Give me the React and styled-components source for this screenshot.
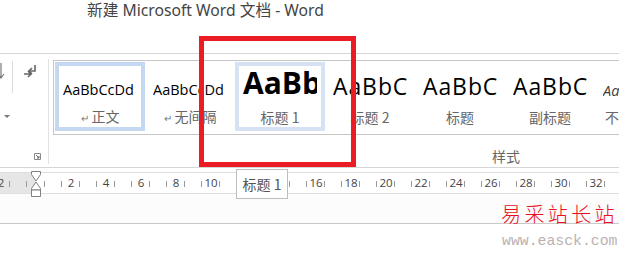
import React from "react";
import styled, { createGlobalStyle } from "styled-components";

const GlobalStyle = createGlobalStyle`
  html, body {
    margin: 0;
    padding: 0;
    background: #ffffff;
  }
  body {
    width: 619px;
    height: 255px;
    overflow: hidden;
    font-family: "Open Sans", "Noto Sans CJK SC", sans-serif;
  }
`;

const Window = styled.div`
  position: relative;
  width: 619px;
  height: 255px;
  overflow: hidden;
  display: flex;
  flex-direction: column;
`;

const TitleBar = styled.div`
  height: 54px;
  border-bottom: 1px solid #d6d6d6;
  padding-left: 87px;
  box-sizing: border-box;
`;

const Title = styled.div`
  font-family: "Noto Sans", "Noto Sans CJK SC", sans-serif;
  font-size: 15.7px;
  line-height: 20px;
  color: #444;
`;

const Ribbon = styled.div`
  height: 114px;
  border-bottom: 1px solid #d6d6d6;
  box-sizing: border-box;
  display: flex;
`;

const ParaGroup = styled.div`
  width: 48px;
  flex-shrink: 0;
  margin: 5px 0 3px;
  border-right: 1px solid #e2e2e2;
  display: grid;
  grid-template-columns: 13px 1fr;
  grid-template-rows: 43px 30px 1fr;
`;

const Cell = styled.div`
  display: flex;
  align-items: ${(p) => p.$align || "center"};
  justify-content: ${(p) => p.$justify || "center"};
  grid-column: ${(p) => p.$col || "auto"};
`;

const Divider = styled.div`
  align-self: start;
  height: 32px;
  margin-top: 2px;
  border-right: 1px solid #dcdcdc;
  display: flex;
  align-items: flex-start;
`;

const StylesGroup = styled.div`
  flex: 1;
  display: flex;
  flex-direction: column;
  padding-left: 4px;
  padding-top: 6px;
`;

const Gallery = styled.div`
  height: 75px;
  box-sizing: border-box;
  border: 1px solid #c6c6c6;
  border-right: none;
  padding: 1px 0 0 1px;
  display: flex;
  overflow: hidden;
`;

const Item = styled.div`
  width: 90px;
  height: 69px;
  flex-shrink: 0;
  box-sizing: border-box;
  border: 4px solid ${(p) => p.$frame || "transparent"};
  padding: 0 4px;
  display: flex;
  flex-direction: column;
  overflow: hidden;
`;

const Sample = styled.div`
  height: 32px;
  display: flex;
  align-items: flex-end;
  white-space: nowrap;
  overflow: hidden;
  font-family: "Open Sans", sans-serif;
  font-size: ${(p) => p.$size}px;
  font-weight: ${(p) => (p.$bold ? 700 : 400)};
  font-style: ${(p) => (p.$italic ? "italic" : "normal")};
  color: ${(p) => p.$color || "#000"};
  line-height: 1;
  letter-spacing: ${(p) => p.$track || 0}px;
`;

const Label = styled.div`
  margin-top: 10px;
  text-align: center;
  white-space: nowrap;
  font-family: "Noto Sans CJK SC", sans-serif;
  font-size: 14px;
  line-height: 18px;
  color: #666;
`;

const Mark = styled.span`
  font-size: 10px;
  margin-right: 3px;
  color: #777;
`;

const GroupFooter = styled.div`
  width: 906px;
  text-align: center;
  margin-top: 11px;
  font-family: "Noto Sans CJK SC", sans-serif;
  font-size: 14px;
  color: #666;
`;

const Gap = styled.div`
  height: 4px;
`;

const Ruler = styled.div`
  position: relative;
  height: 22px;
  box-sizing: border-box;
  border-top: 1px solid #dedede;
  border-bottom: 1px solid #dedede;
  display: flex;
  align-items: center;
  background: linear-gradient(to right, #e6e6e6 0 36px, #ffffff 36px);
`;

const Scale = styled.div`
  display: flex;
  margin-left: -7.75px;
`;

const Unit = styled.div`
  position: relative;
  width: 17.5px;
  flex-shrink: 0;
  text-align: center;
  font-family: "Open Sans", sans-serif;
  font-size: 11.5px;
  line-height: 20px;
  color: #444;

  &::after {
    content: "";
    position: absolute;
    right: 0;
    top: 8px;
    width: 1px;
    height: 6px;
    background: #9a9a9a;
  }
`;

const Indent = styled.svg`
  position: absolute;
  left: 30px;
  top: -2px;
`;

const DocArea = styled.div`
  height: 30px;
  box-sizing: border-box;
  background: #fcfcfc;
  border-bottom: 1px solid #c9c9c9;
`;

const Highlight = styled.div`
  position: absolute;
  left: 199px;
  top: 36px;
  width: 157px;
  height: 131px;
  box-sizing: border-box;
  border: 5px solid #ec1c24;
`;

const Tip = styled.div`
  position: absolute;
  left: 236px;
  top: 169px;
  width: 52px;
  height: 30px;
  box-sizing: border-box;
  border: 1px solid #bdbdbd;
  background: #fff;
  display: flex;
  align-items: center;
  justify-content: center;
  font-family: "Noto Sans CJK SC", sans-serif;
  font-size: 14px;
  color: #555;
`;

const Stamp = styled.div`
  position: absolute;
  left: 501px;
  top: 201px;
  display: flex;
  flex-direction: column;
  align-items: flex-start;
  white-space: nowrap;
`;

const StampName = styled.div`
  font-family: "Noto Sans CJK SC", serif;
  font-size: 20px;
  font-weight: 300;
  letter-spacing: 3.4px;
  color: #e8101c;
  line-height: 26px;
`;

const StampUrl = styled.div`
  font-family: "Liberation Mono", monospace;
  font-size: 14.8px;
  color: #bbb1b1;
  line-height: 20px;
  margin-top: 4px;
  margin-left: 1px;
`;

const styles = [
  { sample: "AaBbCcDd", size: 14.5, label: "正文", mark: true, frame: "#c5d8f1" },
  { sample: "AaBbCcDd", size: 14.5, label: "无间隔", mark: true },
  { sample: "AaBb", size: 30, bold: true, label: "标题 1", frame: "#d6e2f3" },
  { sample: "AaBbC", size: 23, label: "标题 2", track: 0.9 },
  { sample: "AaBbC", size: 23, label: "标题", track: 0.9 },
  { sample: "AaBbC", size: 23, label: "副标题", track: 0.9 },
  { sample: "AaBbCcDd", size: 14.5, italic: true, color: "#404040", label: "不明显强调" },
];

const units = Array.from({ length: 38 }, (_, i) => i - 2);

export default function App() {
  return (
    <>
      <GlobalStyle />
      <Window>
        <TitleBar>
          <Title>新建 Microsoft Word 文档 - Word</Title>
        </TitleBar>

        <Ribbon>
          <ParaGroup>
            <Divider>
              <svg width="6" height="20" viewBox="0 0 6 20">
                <path d="M1 2v14M-2 13l3 4 3-4" stroke="#777" strokeWidth="1.2" fill="none" />
              </svg>
            </Divider>
            <Cell $align="flex-start">
              <svg width="18" height="18" viewBox="0 0 18 18" style={{ marginTop: 4 }}>
                <path d="M13 2v6H8" stroke="#666" strokeWidth="1.6" fill="none" />
                <path d="M10 5l-3 3 3 3" stroke="#666" strokeWidth="1.6" fill="none" />
                <path d="M2 11h7M6 8l3 3-3 3" stroke="#666" strokeWidth="1.6" fill="none" />
              </svg>
            </Cell>
            <Cell>
              <svg width="6" height="4" viewBox="0 0 6 4">
                <path d="M0 0h6L3 3z" fill="#777" />
              </svg>
            </Cell>
            <Cell />
            <Cell $col="1 / span 2" $justify="flex-end" $align="flex-end">
              <svg width="7" height="7" viewBox="0 0 7 7" style={{ marginRight: 7, marginBottom: 4 }}>
                <path d="M0.5 6.5V0.5h6v6z" stroke="#888" fill="none" />
                <path d="M2 2l3 3M3 5h2V3" stroke="#666" fill="none" />
              </svg>
            </Cell>
          </ParaGroup>

          <StylesGroup>
            <Gallery>
              {styles.map((s) => (
                <Item key={s.label} $frame={s.frame}>
                  <Sample
                    $size={s.size}
                    $bold={s.bold}
                    $italic={s.italic}
                    $color={s.color}
                    $track={s.track}
                  >
                    {s.sample}
                  </Sample>
                  <Label>
                    {s.mark && <Mark>↵</Mark>}
                    {s.label}
                  </Label>
                </Item>
              ))}
            </Gallery>
            <GroupFooter>样式</GroupFooter>
          </StylesGroup>
        </Ribbon>

        <Gap />

        <Ruler>
          <Scale>
            {units.map((n) => (
              <Unit key={n}>{n !== 0 && n % 2 === 0 ? Math.abs(n) : ""}</Unit>
            ))}
          </Scale>
          <Indent width="12" height="26" viewBox="0 0 12 26">
            <path d="M1.5 0.5h9v3L6 10 1.5 3.5z" fill="#fff" stroke="#808080" />
            <path d="M6 11l4.5 6.5v1.5h-9v-1.5z" fill="#fff" stroke="#808080" />
            <path d="M1.5 19h9v6.5h-9z" fill="#fff" stroke="#808080" />
          </Indent>
        </Ruler>

        <DocArea />

        <Highlight />
        <Tip>标题 1</Tip>
        <Stamp>
          <StampName>易采站长站</StampName>
          <StampUrl>www.easck.com</StampUrl>
        </Stamp>
      </Window>
    </>
  );
}
